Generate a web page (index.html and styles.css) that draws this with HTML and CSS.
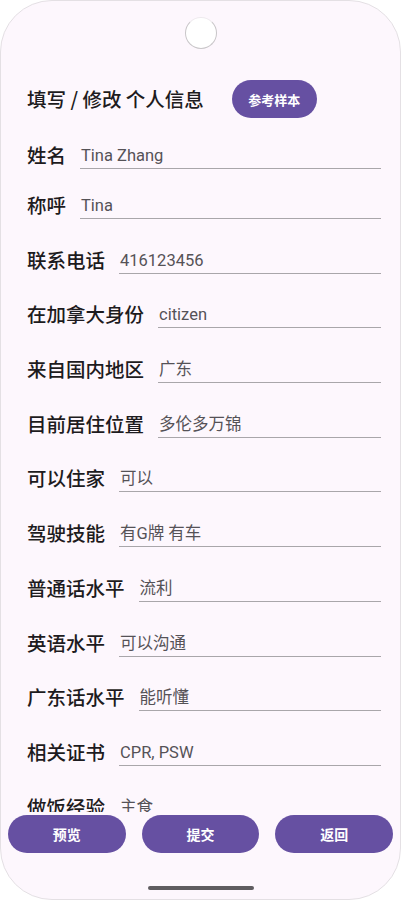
FILE: index.html
```html
<!DOCTYPE html>
<html lang="zh-CN">
<head>
    <meta charset="UTF-8">
    <meta name="viewport" content="width=device-width, initial-scale=1.0">
    <title>填写 / 修改 个人信息</title>
    <link rel="stylesheet" href="styles.css">
</head>
<body>
    <div class="phone">
        <div class="camera"></div>

        <div class="content">
            <div class="title-row">
                <h1 class="title">填写 / 修改 个人信息</h1>
                <button class="pill sample-button">参考样本</button>
            </div>

            <div class="form">
                <div class="row">
                    <span class="label">姓名</span>
                    <span class="field">Tina Zhang</span>
                </div>
                <div class="row">
                    <span class="label">称呼</span>
                    <span class="field">Tina</span>
                </div>
                <div class="row">
                    <span class="label">联系电话</span>
                    <span class="field">416123456</span>
                </div>
                <div class="row">
                    <span class="label">在加拿大身份</span>
                    <span class="field">citizen</span>
                </div>
                <div class="row">
                    <span class="label">来自国内地区</span>
                    <span class="field">广东</span>
                </div>
                <div class="row">
                    <span class="label">目前居住位置</span>
                    <span class="field">多伦多万锦</span>
                </div>
                <div class="row">
                    <span class="label">可以住家</span>
                    <span class="field">可以</span>
                </div>
                <div class="row">
                    <span class="label">驾驶技能</span>
                    <span class="field">有G牌 有车</span>
                </div>
                <div class="row">
                    <span class="label">普通话水平</span>
                    <span class="field">流利</span>
                </div>
                <div class="row">
                    <span class="label">英语水平</span>
                    <span class="field">可以沟通</span>
                </div>
                <div class="row">
                    <span class="label">广东话水平</span>
                    <span class="field">能听懂</span>
                </div>
                <div class="row">
                    <span class="label">相关证书</span>
                    <span class="field">CPR, PSW</span>
                </div>
                <div class="row">
                    <span class="label">做饭经验</span>
                    <span class="field">主食</span>
                </div>
            </div>
        </div>

        <div class="actions">
            <button class="pill action-button">预览</button>
            <button class="pill action-button">提交</button>
            <button class="pill action-button">返回</button>
        </div>

        <div class="home-indicator"></div>
    </div>
</body>
</html>
```

FILE: styles.css
```css
body {
    margin: 0;
    background-color: #ffffff;
    font-family: "Noto Sans CJK SC", "Noto Sans", sans-serif;
}

.phone {
    width: 401px;
    height: 900px;
    box-sizing: border-box;
    border: 1px solid #e4e0e4;
    border-radius: 52px;
    background-color: #fdf7fd;
    display: flex;
    flex-direction: column;
    overflow: hidden;
}

.camera {
    width: 30px;
    height: 30px;
    margin: 16px auto 0;
    border-radius: 50%;
    background-color: #ffffff;
    border: 1px solid #c9c6c9;
    border-top-color: #eeeaee;
    flex-shrink: 0;
}

.content {
    flex: 1;
    min-height: 0;
    overflow: hidden;
    padding: 0 19px 0 26px;
}

.title-row {
    display: flex;
    align-items: center;
    margin-top: 31px;
}

.title {
    margin: 0;
    font-size: 19.5px;
    font-weight: 500;
    color: #1d1b20;
    line-height: 28px;
}

.pill {
    border: none;
    border-radius: 19px;
    background-color: #6650a2;
    color: #ffffff;
    font-family: "Noto Sans CJK SC", sans-serif;
    font-weight: 700;
    cursor: pointer;
}

.sample-button {
    margin-left: 28px;
    width: 85px;
    height: 38px;
    font-size: 13px;
    padding: 0;
}

.row {
    display: flex;
    align-items: flex-end;
    margin-top: 26.7px;
}

.row:first-child,
.row:nth-child(2) {
    margin-top: 22.5px;
}

.label {
    font-size: 19.5px;
    font-weight: 500;
    line-height: 28px;
    color: #1d1b20;
    white-space: nowrap;
    margin-right: 14px;
}

.field {
    flex: 1;
    font-family: Roboto, "Noto Sans CJK SC", sans-serif;
    font-size: 16.5px;
    line-height: 24px;
    color: #555257;
    border-bottom: 1.5px solid #a9a6aa;
    padding-left: 1px;
}

.actions {
    display: flex;
    gap: 16px;
    padding: 3px 7px 0;
    flex-shrink: 0;
}

.action-button {
    flex: 1;
    height: 38px;
    font-size: 14px;
}

.home-indicator {
    width: 106px;
    height: 4px;
    border-radius: 2px;
    background-color: #5f5c60;
    margin: 33px auto 9px;
    flex-shrink: 0;
}
```
